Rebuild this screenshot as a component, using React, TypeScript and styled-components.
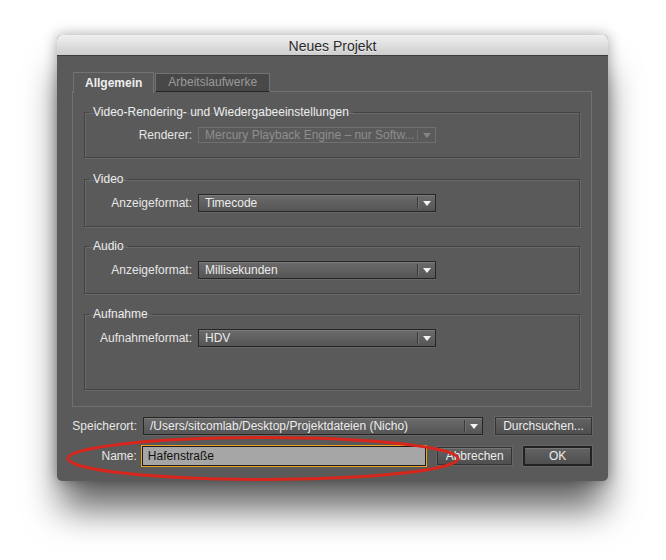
import React, { FC } from 'react';
import styled, { createGlobalStyle } from 'styled-components';

const GlobalStyle = createGlobalStyle`
  body {
    margin: 0;
    background: #ffffff;
    font-family: "Liberation Sans", Arial, sans-serif;
  }
`;

const Page = styled.div`
  position: relative;
  width: 666px;
  height: 560px;
  box-sizing: border-box;
  padding: 35px 0 0 57px;
  overflow: hidden;
`;

const Dialog = styled.div`
  width: 551px;
  height: 446px;
  background: #5a5a5a;
  border-radius: 5px;
  box-shadow: 0 32px 36px -4px rgba(0, 0, 0, 0.6), 0 0 14px rgba(0, 0, 0, 0.35);
  display: flex;
  flex-direction: column;
  overflow: hidden;
`;

const TitleBar = styled.div`
  height: 21px;
  line-height: 22px;
  text-align: center;
  font-size: 14px;
  color: #2b2b2b;
  background: linear-gradient(#f0f0f0, #cdcdcd);
  border-bottom: 1px solid #3c3c3c;
  box-sizing: border-box;
  text-shadow: 0 1px 0 rgba(255, 255, 255, 0.5);
`;

const Body = styled.div`
  padding: 16px 16px 15px 15px;
  display: flex;
  flex-direction: column;
`;

const TabRow = styled.div`
  display: flex;
  height: 20px;
  padding-left: 1px;
  position: relative;
  z-index: 1;
  margin-bottom: -1px;
`;

const Tab = styled.div<{ $active?: boolean }>`
  height: ${(p) => (p.$active ? '21px' : '19px')};
  box-sizing: border-box;
  padding: 0 ${(p) => (p.$active ? '11px' : '12px')};
  margin-right: 1px;
  margin-top: ${(p) => (p.$active ? '0' : '1px')};
  font-size: 12px;
  line-height: ${(p) => (p.$active ? '20px' : '17px')};
  font-weight: ${(p) => (p.$active ? 'bold' : 'normal')};
  color: ${(p) => (p.$active ? '#eeeeee' : '#9a9a9a')};
  background: ${(p) => (p.$active ? '#5a5a5a' : '#484848')};
  border: 1px solid #727272;
  border-bottom: ${(p) => (p.$active ? 'none' : '1px solid #262626')};
`;

const Panel = styled.div`
  height: 316px;
  box-sizing: border-box;
  border: 1px solid #707070;
  padding: 13px 11px 0 11px;
  display: flex;
  flex-direction: column;
`;

const Group = styled.fieldset<{ $minHeight?: number; $top: number }>`
  margin: ${(p) => p.$top}px 0 0 0;
  padding: 0 0 14px 0;
  border: 1px solid #434343;
  box-shadow: 1px 1px 0 #6a6a6a, inset 1px 1px 0 #6a6a6a;
  min-height: ${(p) => (p.$minHeight ? `${p.$minHeight}px` : 'auto')};
  box-sizing: border-box;
`;

const Legend = styled.legend`
  margin-left: 4px;
  padding: 0 4px;
  font-size: 12px;
  line-height: 14px;
  color: #ededed;
`;

const FieldRow = styled.div`
  display: grid;
  grid-template-columns: 107px 238px;
  column-gap: 6px;
  align-items: center;
  margin-top: 8px;
`;

const FieldLabel = styled.span`
  font-size: 12px;
  color: #e6e6e6;
  text-align: right;
  white-space: nowrap;
`;

const Select = styled.div<{ $disabled?: boolean; $width?: number; $height?: number }>`
  display: flex;
  align-items: stretch;
  width: ${(p) => (p.$width ? `${p.$width}px` : 'auto')};
  height: ${(p) => p.$height ?? 18}px;
  box-sizing: border-box;
  border: 1px solid ${(p) => (p.$disabled ? '#707070' : '#262626')};
  background: ${(p) => (p.$disabled ? '#5a5a5a' : 'linear-gradient(#6b6b6b, #555555)')};
  box-shadow: ${(p) => (p.$disabled ? 'none' : 'inset 0 1px 0 #7a7a7a, 0 1px 0 #666')};
  color: ${(p) => (p.$disabled ? '#8e8e8e' : '#ececec')};
  font-size: 12px;
`;

const SelectValue = styled.span`
  flex: 1;
  padding-left: 6px;
  white-space: nowrap;
  overflow: hidden;
  display: flex;
  align-items: center;
`;

const SelectArrow = styled.span<{ $disabled?: boolean }>`
  width: 17px;
  display: flex;
  align-items: center;
  justify-content: center;
  border-left: 1px solid ${(p) => (p.$disabled ? '#707070' : '#3a3a3a')};
  box-shadow: ${(p) => (p.$disabled ? 'none' : 'inset 1px 0 0 #727272')};
  margin: 2px 0;
`;

const Bottom = styled.div`
  margin-top: 10px;
  display: flex;
  flex-direction: column;
  gap: 11px;
`;

const BottomRow = styled.div`
  display: flex;
  align-items: center;
`;

const BottomLabel = styled.span<{ $gap: number }>`
  width: 65px;
  margin-right: ${(p) => p.$gap}px;
  text-align: right;
  font-size: 12px;
  color: #e6e6e6;
`;

const Button = styled.button<{ $width: number; $default?: boolean; $left: number }>`
  width: ${(p) => p.$width}px;
  height: ${(p) => (p.$default ? 20 : 18)}px;
  margin-left: ${(p) => p.$left}px;
  padding: 0;
  box-sizing: border-box;
  font-family: "Liberation Sans", Arial, sans-serif;
  font-size: 12px;
  color: #ececec;
  background: linear-gradient(#636363, #4f4f4f);
  border: ${(p) => (p.$default ? '2px solid #222222' : '1px solid #343434')};
  box-shadow: inset 0 1px 0 #767676, 0 0 0 1px #666666;
`;

const NameInput = styled.div`
  width: 285px;
  height: 20px;
  box-sizing: border-box;
  background: #a6a6a6;
  border: 1px solid #1c1c1c;
  box-shadow: 0 0 0 1px #eba21e;
  color: #111111;
  font-size: 12px;
  line-height: 18px;
  padding-left: 5px;
`;

const Annotation = styled.svg`
  position: absolute;
  left: 64px;
  top: 434px;
  pointer-events: none;
`;

const Arrow: FC<{ disabled?: boolean }> = ({ disabled }) => (
  <SelectArrow $disabled={disabled}>
    <svg width="8" height="5" viewBox="0 0 8 5">
      <polygon points="0,0 8,0 4,5" fill={disabled ? '#858585' : '#f2f2f2'} />
    </svg>
  </SelectArrow>
);

const Dropdown: FC<{ value: string; disabled?: boolean; width?: number; height?: number }> = ({
  value, disabled, width, height,
}) => (
  <Select $disabled={disabled} $width={width} $height={height}>
    <SelectValue>{value}</SelectValue>
    <Arrow disabled={disabled} />
  </Select>
);

const groups = [
  { legend: 'Video-Rendering- und Wiedergabeeinstellungen', label: 'Renderer:', value: 'Mercury Playback Engine – nur Softw...', disabled: true, top: 0 },
  { legend: 'Video', label: 'Anzeigeformat:', value: 'Timecode', top: 14 },
  { legend: 'Audio', label: 'Anzeigeformat:', value: 'Millisekunden', top: 12 },
  { legend: 'Aufnahme', label: 'Aufnahmeformat:', value: 'HDV', minHeight: 83, top: 13 },
];

const App: FC = () => (
  <Page>
    <GlobalStyle />
    <Dialog>
      <TitleBar>Neues Projekt</TitleBar>
      <Body>
        <TabRow>
          <Tab $active>Allgemein</Tab>
          <Tab>Arbeitslaufwerke</Tab>
        </TabRow>
        <Panel>
          {groups.map(({ legend, label, value, disabled, minHeight, top }) => (
            <Group key={legend} $minHeight={minHeight} $top={top}>
              <Legend>{legend}</Legend>
              <FieldRow>
                <FieldLabel>{label}</FieldLabel>
                <Dropdown value={value} disabled={disabled} height={disabled ? 16 : 18} />
              </FieldRow>
            </Group>
          ))}
        </Panel>
        <Bottom>
          <BottomRow>
            <BottomLabel $gap={6}>Speicherort:</BottomLabel>
            <Dropdown value="/Users/sitcomlab/Desktop/Projektdateien (Nicho)" width={340} />
            <Button $width={97} $left={12}>Durchsuchen...</Button>
          </BottomRow>
          <BottomRow>
            <BottomLabel $gap={5}>Name:</BottomLabel>
            <NameInput>Hafenstraße</NameInput>
            <Button $width={75} $left={11}>Abbrechen</Button>
            <Button $width={69} $left={11} $default>OK</Button>
          </BottomRow>
        </Bottom>
      </Body>
    </Dialog>
    <Annotation width="400" height="50" viewBox="0 0 400 50">
      <ellipse cx="199" cy="24.5" rx="195" ry="21" fill="none" stroke="#d8261c" strokeWidth="3" />
    </Annotation>
  </Page>
);

export default App;
